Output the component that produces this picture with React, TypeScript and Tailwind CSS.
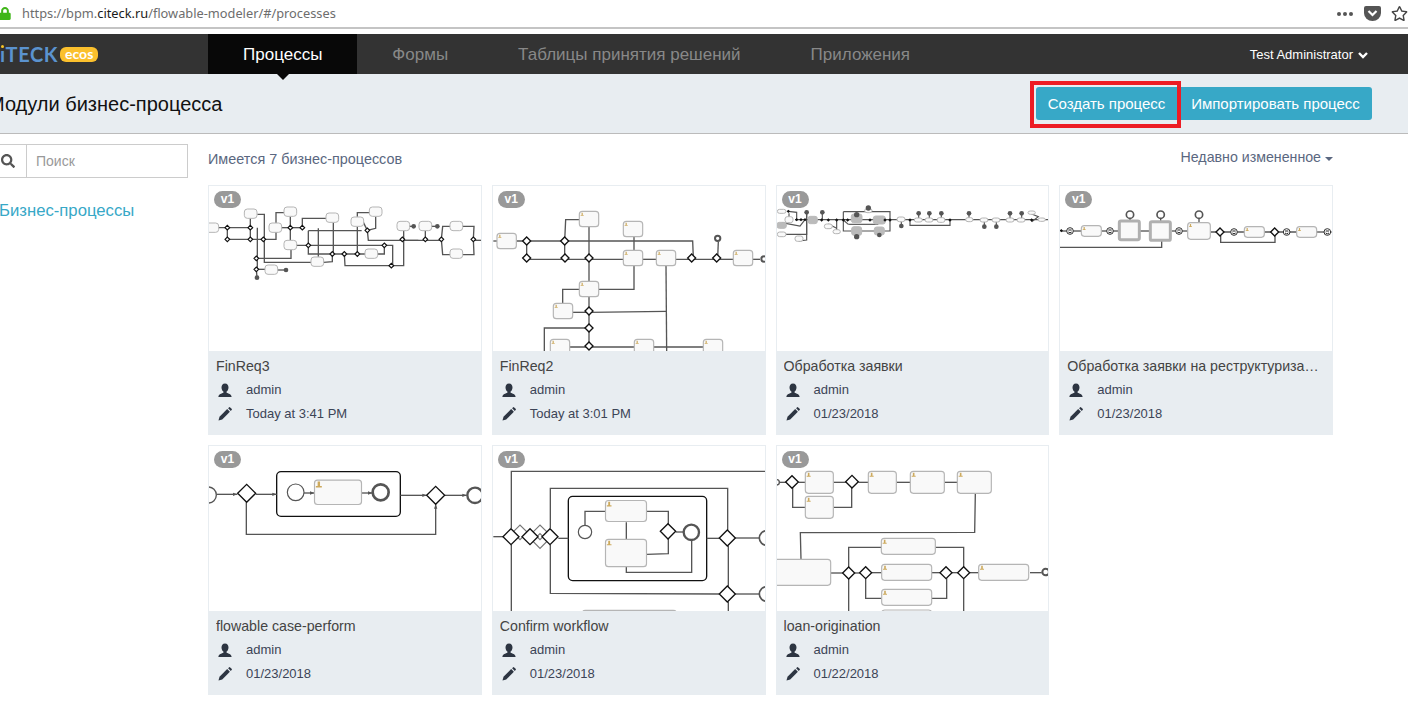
import React from "react";
import { FaSearch, FaLock, FaRegStar } from "react-icons/fa";

type Diagram = {
  vb: string;
  lines: number[][];
  tasks?: number[][];
  heavy?: number[][];
  gws?: number[][];
  faint?: number[][];
  circles?: number[][];
  dots?: number[][];
  tiny?: number[][];
  subs?: number[][];
  smiles?: number[][];
  mark?: number;
  arrows?: boolean;
  sw?: number;
  taskSw?: number;
  rx?: number;
};

const DiagramSvg = ({ d }: { d: Diagram }) => {
  const sw = d.sw ?? 4;
  const ts = d.taskSw ?? 3.5;
  const rx = d.rx ?? 9;
  const id = d.vb.replace(/\s/g, "-");
  return (
    <svg viewBox={d.vb} className="block w-full h-full" preserveAspectRatio="xMinYMin slice">
      <defs>
        <marker id={id} markerUnits="userSpaceOnUse" markerWidth="14" markerHeight="12" refX="13" refY="6" orient="auto">
          <path d="M0 1L13 6L0 11z" fill="#555" />
        </marker>
      </defs>
      {d.faint?.map(([x, y, r], i) => (
        <path key={i} d={`M${x - r} ${y}L${x} ${y - r}L${x + r} ${y}L${x} ${y + r}z`} fill="none" stroke="#777" strokeWidth={3.5} />
      ))}
      {d.subs?.map(([x, y, w, h], i) => (
        <rect key={i} x={x} y={y} width={w} height={h} rx={13} fill="#fff" stroke="#111" strokeWidth={4} />
      ))}
      {d.lines.map((l, i) => (
        <polyline
          key={i}
          points={l.join(" ")}
          fill="none"
          stroke="#555"
          strokeWidth={sw}
          markerEnd={d.arrows ? `url(#${id})` : undefined}
        />
      ))}
      {d.tasks?.map(([cx, cy, w, h, g], i) => (
        <g key={i}>
          <rect x={cx - w / 2} y={cy - h / 2} width={w} height={h} rx={rx} fill={g ? "#bbbbbb" : "#f9f9f9"} stroke={g ? "#bbb" : "#b5b5b5"} strokeWidth={ts} />
          {d.mark ? (
            <path
              d={`M${cx - w / 2 + 4} ${cy - h / 2 + 4 + d.mark}h${d.mark}v-${d.mark * 0.25}h-${d.mark * 0.3}v-${d.mark * 0.75}h-${d.mark * 0.4}v${d.mark * 0.75}h-${d.mark * 0.3}z`}
              fill="#cdaa5e"
            />
          ) : null}
        </g>
      ))}
      {d.heavy?.map(([cx, cy, w, h], i) => (
        <rect key={i} x={cx - w / 2} y={cy - h / 2} width={w} height={h} rx={5} fill="#f9f9f9" stroke="#b0b0b0" strokeWidth={9} />
      ))}
      {d.circles?.map(([x, y, r, s], i) => (
        <circle key={i} cx={x} cy={y} r={r} fill="#fff" stroke="#555" strokeWidth={s} />
      ))}
      {d.smiles?.map(([x, y], i) => (
        <g key={i}>
          <circle cx={x} cy={y} r={10} fill="#fff" stroke="#333" strokeWidth={3} />
          <path d={`M${x - 5} ${y - 3}h10M${x - 5} ${y + 3}q5 5 10 0`} fill="none" stroke="#222" strokeWidth={3} />
        </g>
      ))}
      {d.dots?.map(([x, y, r], i) => (
        <circle key={i} cx={x} cy={y} r={r} fill="#555" />
      ))}
      {d.gws?.map(([x, y, r], i) => (
        <path key={i} d={`M${x - r} ${y}L${x} ${y - r}L${x + r} ${y}L${x} ${y + r}z`} fill="#fff" stroke="#111" strokeWidth={r > 10 ? 4 : 3.5} />
      ))}
      {d.tiny?.map(([x, y], i) => (
        <path key={i} d={`M${x - 5} ${y}L${x} ${y - 5}L${x + 5} ${y}L${x} ${y + 5}z`} fill="#111" />
      ))}
    </svg>
  );
};

const T1 = (x: number, y: number) => [x, y, 38, 28];
const T2 = (x: number, y: number) => [x, y, 58, 46];
const G1 = (x: number, y: number) => [x, y, 7];
const G2 = (x: number, y: number) => [x, y, 12];
const E = (x: number, y: number, w: number, h: number, g = 0) => [x, y, w, h, g];

const d1: Diagram = {
  vb: "12 18 816 495",
  taskSw: 3,
  lines: [
    [40, 143, 136, 143], [67, 143, 67, 178], [67, 178, 213, 178, 213, 130], [136, 178, 136, 115],
    [157, 103, 178, 103, 178, 247, 320, 247], [157, 143, 157, 268], [154, 235, 258, 235, 258, 210],
    [154, 268, 180, 268], [218, 270, 243, 270], [154, 268, 156, 293], [213, 130, 213, 98, 238, 98],
    [256, 110, 256, 180], [230, 143, 292, 143], [292, 143, 292, 115, 365, 115],
    [310, 152, 470, 152], [310, 152, 310, 222, 382, 222], [275, 196, 538, 196], [340, 145, 340, 230],
    [385, 128, 385, 222], [356, 247, 382, 245, 382, 222], [382, 222, 480, 222], [457, 140, 457, 222],
    [457, 110, 457, 98, 495, 98], [475, 127, 487, 151], [512, 110, 512, 145, 487, 151],
    [487, 151, 490, 181, 640, 181], [538, 196, 538, 222, 518, 222], [538, 196, 563, 196, 563, 257, 559, 257],
    [418, 222, 420, 257, 559, 257], [559, 257, 596, 257, 596, 152], [661, 178, 661, 152],
    [592, 181, 709, 181], [709, 178, 713, 139, 735, 139], [773, 139, 807, 139, 805, 178],
    [709, 178, 713, 224, 735, 224], [773, 224, 807, 224, 805, 178], [805, 181, 830, 181],
    [610, 139, 626, 139], [680, 139, 697, 139],
  ],
  tasks: [
    T1(22, 143), T1(137, 101), T1(256, 95), T1(211, 143), T1(256, 195), T1(382, 113), T1(457, 125),
    T1(512, 95), T1(337, 245), T1(499, 221), T1(595, 138), T1(661, 138), T1(754, 138), T1(754, 221), T1(199, 269),
  ],
  gws: [
    G1(67, 143), G1(67, 178), G1(136, 143), G1(136, 178), G1(175, 178), G1(256, 143), G1(292, 143),
    G1(310, 196), G1(382, 222), G1(418, 222), G1(457, 222), G1(487, 151), G1(538, 196), G1(559, 257),
    G1(592, 178), G1(661, 178), G1(709, 178), G1(805, 178), G1(154, 235), G1(154, 268),
  ],
  dots: [[626, 139, 7], [697, 139, 7], [243, 270, 7], [156, 293, 7]],
};

const d2: Diagram = {
  vb: "9 18 816 495",
  mark: 9,
  lines: [
    [10, 183, 22, 183], [79, 183, 608, 183, 610, 234], [110, 183, 110, 234], [110, 238, 400, 238],
    [224, 183, 224, 234], [224, 183, 227, 119, 268, 119], [297, 140, 297, 510], [432, 170, 432, 211],
    [458, 238, 499, 238], [557, 238, 680, 238], [683, 234, 685, 185], [680, 238, 730, 238], [788, 238, 810, 238],
    [326, 328, 432, 328, 432, 257], [268, 328, 218, 328, 218, 370], [248, 397, 297, 397], [297, 397, 528, 394],
    [528, 257, 530, 515], [297, 444, 163, 444, 163, 515], [240, 501, 433, 501], [491, 501, 640, 501],
  ],
  tasks: [
    T2(50, 183), T2(297, 117), T2(429, 147), T2(429, 234), T2(528, 234), T2(759, 234), T2(297, 327),
    T2(219, 393), T2(210, 501), T2(462, 501), T2(669, 501),
  ],
  gws: [
    G2(110, 183), G2(224, 183), G2(110, 234), G2(225, 234), G2(297, 234), G2(605, 234), G2(680, 234),
    G2(297, 393), G2(297, 444), G2(297, 498),
  ],
  circles: [[683, 175, 8, 6], [822, 237, 8, 6]],
};

const d3: Diagram = {
  vb: "6 18 816 495",
  sw: 3.5,
  taskSw: 3,
  rx: 7,
  lines: [
    [60, 119, 820, 119], [205, 95, 345, 95, 345, 153, 205, 153, 205, 95], [220, 133, 310, 133],
    [405, 122, 405, 136, 525, 136, 525, 122], [40, 94, 65, 97, 65, 119], [30, 163, 95, 163, 95, 100],
    [72, 183, 95, 180, 95, 119], [42, 110, 42, 100], [20, 128, 75, 138, 90, 119], [160, 132, 185, 145],
    [185, 120, 185, 155], [205, 120, 220, 133], [245, 104, 245, 115], [313, 165, 313, 150], [280, 85, 280, 95],
    [379, 126, 379, 138], [431, 100, 431, 116], [463, 100, 463, 116], [499, 100, 499, 116], [582, 100, 582, 116],
    [628, 126, 628, 140], [664, 126, 664, 140], [705, 100, 705, 116], [740, 100, 740, 116], [142, 97, 142, 120],
    [95, 97, 95, 119], [770, 102, 790, 110, 770, 125],
  ],
  tasks: [
    E(20, 94, 26, 12), E(42, 119, 24, 18), E(20, 163, 26, 14), E(72, 176, 24, 16), E(20, 136, 28, 18, 1),
    E(113, 120, 28, 22, 1), E(160, 139, 24, 14), E(185, 155, 22, 12), E(280, 92, 22, 12), E(245, 115, 32, 26, 1),
    E(313, 120, 36, 24, 1), E(245, 153, 30, 26, 1), E(313, 153, 30, 24, 1), E(378, 118, 24, 14), E(430, 120, 24, 12),
    E(462, 120, 24, 12), E(498, 120, 24, 14), E(583, 119, 22, 12), E(627, 120, 24, 12), E(663, 120, 24, 12),
    E(705, 120, 24, 12), E(738, 120, 24, 12), E(770, 98, 22, 10), E(800, 119, 22, 10),
  ],
  dots: [
    [95, 97, 7], [142, 97, 7], [280, 84, 8], [245, 104, 8], [245, 170, 8], [313, 165, 7], [379, 138, 7], [431, 100, 7],
    [463, 100, 7], [499, 100, 7], [582, 100, 7], [628, 140, 7], [664, 140, 7], [705, 100, 7], [740, 100, 7],
  ],
  tiny: [
    [40, 94], [65, 119], [78, 119], [90, 119], [140, 120], [160, 120], [185, 120], [205, 120], [218, 120], [285, 120],
    [330, 120], [345, 120], [405, 120], [525, 120], [770, 120],
  ],
};

const d4: Diagram = {
  vb: "15 18 816 495",
  mark: 9,
  lines: [
    [12, 202, 320, 202, 320, 180], [20, 153, 80, 153], [140, 153, 192, 153], [255, 153, 285, 153], [350, 153, 398, 153],
    [467, 156, 570, 156], [628, 156, 725, 156], [785, 156, 830, 156], [497, 168, 497, 187, 660, 187, 660, 168],
    [225, 116, 225, 125], [317, 116, 317, 125], [432, 116, 432, 128],
  ],
  tasks: [E(109, 153, 60, 32), E(432, 153, 68, 50), E(598, 156, 60, 32), E(755, 156, 60, 32)],
  heavy: [[223, 151, 60, 56], [316, 153, 60, 56]],
  circles: [[225, 104, 11, 5], [317, 104, 11, 5], [432, 104, 11, 5]],
  smiles: [[45, 153], [165, 153], [372, 153], [537, 156], [695, 156], [817, 156]],
  gws: [G2(495, 156), G2(659, 156)],
  tiny: [[19, 152]],
};

const d5: Diagram = {
  vb: "12 3 816 495",
  mark: 18,
  arrows: true,
  subs: [[215, 80, 371, 134]],
  lines: [
    [35, 148, 97, 148], [152, 148, 215, 148], [297, 144, 328, 144], [469, 144, 502, 144], [586, 151, 665, 151],
    [720, 151, 785, 151], [124, 172, 124, 268, 692, 268, 692, 178],
  ],
  tasks: [[399, 142, 141, 73]],
  circles: [[10, 150, 24, 4], [272, 142, 25, 3.5], [527, 142, 24, 8], [810, 151, 23, 7]],
  gws: [[125, 145, 27], [692, 151, 27]],
};

const d6: Diagram = {
  vb: "9 3 816 495",
  mark: 14,
  faint: [[90, 262, 22], [150, 262, 22], [150, 288, 22]],
  subs: [[235, 154, 415, 253]],
  lines: [
    [64, 250, 64, 79, 830, 79], [64, 300, 64, 500], [10, 275, 40, 275], [181, 250, 181, 130, 713, 130, 713, 255],
    [181, 300, 181, 445, 690, 447], [205, 280, 235, 280], [285, 240, 285, 199, 347, 199], [409, 283, 409, 232],
    [470, 199, 535, 199, 535, 237], [557, 261, 582, 261], [535, 282, 535, 326, 470, 328],
    [409, 365, 409, 382, 605, 382, 605, 285], [650, 280, 690, 280], [735, 279, 810, 279], [715, 302, 715, 425],
    [735, 447, 810, 447], [715, 470, 715, 500],
  ],
  tasks: [[408, 198, 123, 63], [408, 324, 123, 82], [418, 522, 282, 52]],
  circles: [[285, 261, 20, 3.5], [604, 262, 23, 7], [830, 279, 22, 5], [830, 447, 22, 5]],
  gws: [[63, 275, 24], [120, 275, 24], [180, 275, 24], [534, 259, 23], [712, 279, 24], [712, 447, 24]],
};

const d7: Diagram = {
  vb: "6 3 816 495",
  mark: 12,
  lines: [
    [10, 112, 33, 112], [70, 112, 92, 112], [175, 112, 213, 112], [250, 112, 280, 112], [365, 112, 406, 112],
    [509, 112, 547, 112], [601, 146, 599, 262, 76, 263, 78, 343], [167, 384, 205, 384], [239, 384, 256, 384],
    [290, 383, 320, 383], [221, 366, 221, 307, 320, 307], [481, 307, 566, 307, 566, 366],
    [272, 400, 272, 460, 320, 460], [470, 383, 495, 383], [531, 383, 549, 383], [515, 400, 515, 460, 470, 460],
    [584, 383, 611, 383], [765, 383, 800, 383], [221, 402, 221, 500], [566, 402, 566, 500],
    [53, 128, 53, 187, 91, 187], [176, 187, 230, 187, 230, 128],
  ],
  tasks: [
    [133, 112, 84, 66], [133, 187, 84, 66], [322, 112, 84, 66], [457, 112, 102, 66], [598, 112, 102, 66],
    [400, 304, 162, 48], [395, 382, 150, 48], [395, 457, 150, 48], [395, 520, 150, 50], [686, 382, 150, 48],
    [70, 382, 194, 78],
  ],
  circles: [[5, 112, 8, 4], [812, 381, 10, 6]],
  gws: [[51, 111, 19], [231, 110, 19], [221, 384, 18], [272, 383, 18], [513, 383, 18], [566, 383, 18]],
};

const cards = [
  { title: "FinReq3", date: "Today at 3:41 PM", d: d1 },
  { title: "FinReq2", date: "Today at 3:01 PM", d: d2 },
  { title: "Обработка заявки", date: "01/23/2018", d: d3 },
  { title: "Обработка заявки на реструктуризацию", date: "01/23/2018", d: d4 },
  { title: "flowable case-perform", date: "01/23/2018", d: d5 },
  { title: "Confirm workflow", date: "01/23/2018", d: d6 },
  { title: "loan-origination", date: "01/22/2018", d: d7 },
];

const UserIcon = () => (
  <svg viewBox="0 0 14 14" className="w-[14px] h-[14px] shrink-0" fill="#2d3542">
    <path d="M7 0.5c2.400 0 3.500 1.800 3.500 4 0 1.800-.9 3.400-1.900 4.100v1.200c1.500.8 5 1.200 5 4.200H0.4c0-3 3.500-3.400 5-4.200V8.600C4.400 7.900 3.500 6.300 3.500 4.500c0-2.200 1.100-4 3.500-4z" />
  </svg>
);

const PencilIcon = () => (
  <svg viewBox="0 0 14 14" className="w-[14px] h-[14px] shrink-0" fill="#2d3542">
    <path d="M0.500 13.500l1-3.700L9.200 2.100l2.700 2.700L4.200 12.500z" />
    <path d="M10.100 1.200l.8-.8a.9.9 0 0 1 1.300 0l1.400 1.400a.9.9 0 0 1 0 1.300l-.8.8z" />
  </svg>
);

const Card = ({ title, date, d }: { title: string; date: string; d: Diagram }) => (
  <div className="flex flex-col h-[250px] min-w-0">
    <div className="relative h-[166px] bg-white border border-[#e8edf1] border-b-0 overflow-hidden">
      <DiagramSvg d={d} />
      <span className="absolute left-[5px] top-[5px] w-[27px] h-[17px] rounded-full bg-[#999] text-white text-[12px] font-bold leading-[17px] text-center">
        v1
      </span>
    </div>
    <div className="flex-1 bg-[#e8edf1] pt-[6px] px-[8px]">
      <div className="text-[14.2px] leading-[18px] truncate text-[#444] pr-[4px]">{title}</div>
      <div className="flex items-center h-[24px] mt-[3px] pl-[2px] text-[13px] text-[#3c4456]">
        <UserIcon />
        <span className="ml-[14px]">admin</span>
      </div>
      <div className="flex items-center h-[24px] pl-[2px] text-[13px] text-[#3c4456]">
        <PencilIcon />
        <span className="ml-[14px]">{date}</span>
      </div>
    </div>
  </div>
);

const tabs = ["Формы", "Таблицы принятия решений", "Приложения"];

export default function App() {
  return (
    <div className="h-[707px] w-[1408px] overflow-hidden bg-white font-['Liberation_Sans',Arial,sans-serif]">
      {/* browser bar */}
      <div className="h-[29px] flex items-center border-b-2 border-[#c4c4c4] font-['Noto_Sans',sans-serif]">
        <FaLock className="w-[12px] h-[13px] -ml-[1px] text-[#3fb618]" />
        <div className="ml-[11px] pt-[1px] text-[12.8px] text-[#6d6d6d] whitespace-nowrap">
          https://bpm.<span className="text-[#1a1a1a]">citeck.ru</span>/flowable-modeler/#/processes
        </div>
        <div className="ml-auto flex items-center">
          <div className="flex gap-[2px] mr-[11px]">
            <span className="w-[4px] h-[4px] rounded-full bg-[#555]" />
            <span className="w-[4px] h-[4px] rounded-full bg-[#555]" />
            <span className="w-[4px] h-[4px] rounded-full bg-[#555]" />
          </div>
          <svg viewBox="0 0 17 15" className="w-[17px] h-[15px] mr-[10px]">
            <path d="M2 0h13a2 2 0 0 1 2 2v5a8.500 8 0 0 1-17 0V2a2 2 0 0 1 2-2z" fill="#555" />
            <path d="M4.500 5l4 4 4-4" fill="none" stroke="#fff" strokeWidth="2.200" />
          </svg>
          <FaRegStar className="w-[17px] h-[17px] text-[#444]" />
        </div>
      </div>

      {/* navbar */}
      <div className="mt-[5px] h-[40px] bg-[#333] flex items-stretch">
        <div className="w-[208px] flex items-center shrink-0">
          <span className="relative font-['Lato',sans-serif] font-bold text-[20px] leading-none tracking-[0.6px] text-[#5b93cf]">
            ıTECK
            <span className="absolute left-[1px] top-[1px] w-[3px] h-[3px] rounded-full bg-[#f7c325]" />
          </span>
          <span className="ml-[2px] w-[38px] h-[15px] rounded-[6px] bg-[#fbc02d] text-white text-center text-[14px] leading-[14px] font-bold font-['Lato',sans-serif]">
            ecos
          </span>
        </div>
        <div className="relative bg-[#080808] px-[35px] pt-[1px] flex items-center text-white text-[17px]">
          Процессы
          <span className="absolute left-1/2 -ml-[6px] top-full w-0 h-0 border-x-[6px] border-x-transparent border-t-[6px] border-t-[#080808]" />
        </div>
        {tabs.map((t) => (
          <div key={t} className="px-[35px] pt-[1px] flex items-center text-[#888] text-[17px]">
            {t}
          </div>
        ))}
        <div className="ml-auto mr-[40px] pt-[1px] flex items-center text-white text-[13px]">
          Test Administrator
          <svg viewBox="0 0 10 8" className="w-[10px] h-[8px] ml-[5px]">
            <path d="M1 2l4 4 4-4" fill="none" stroke="#fff" strokeWidth="2.400" />
          </svg>
        </div>
      </div>

      {/* sub header */}
      <div className="h-[60px] bg-[#e8edf1] border-b border-[#bbb] flex items-center">
        <h1 className="-ml-[12px] text-[20px] text-[#111] font-normal whitespace-nowrap">Модули бизнес-процесса</h1>
        <div className="ml-auto mr-[36px] flex items-center text-white text-[15px]">
          <div className="relative">
            <div className="w-[140px] h-[33px] pt-[1px] pl-[1px] bg-[#37a8c7] rounded-l-[3px] flex items-center justify-center">Создать процесс</div>
            <span className="absolute -left-[6px] -top-[6px] w-[151px] h-[47px] border-[4px] border-[#ed1c24]" />
          </div>
          <div className="w-[196px] h-[33px] pt-[1px] bg-[#37a8c7] rounded-r-[3px] flex items-center justify-center pl-[3px]">Импортировать процесс</div>
        </div>
      </div>

      {/* body */}
      <div className="flex">
        <aside className="w-[208px] shrink-0 pt-[10px]">
          <div className="w-[188px] h-[34px] border border-l-0 border-[#ccc] flex items-center">
            <div className="w-[27px] h-full border-r border-[#ccc] flex items-center pl-[1px]">
              <FaSearch className="w-[14px] h-[14px] text-[#555]" />
            </div>
            <span className="ml-[9px] text-[14px] text-[#999]">Поиск</span>
          </div>
          <div className="-ml-[1px] mt-[23px] text-[16.7px] leading-[20px] text-[#37a8c7] whitespace-nowrap">Бизнес-процессы</div>
        </aside>
        <main className="w-[1125px] pt-[16px]">
          <div className="flex items-center justify-between h-[20px] text-[#5a6780]">
            <span className="text-[14.4px]">Имеется 7 бизнес-процессов</span>
            <span className="flex items-center text-[14.2px] pb-[5px]">
              Недавно измененное
              <span className="ml-[4px] mt-[2px] w-0 h-0 border-x-[4px] border-x-transparent border-t-[4px] border-t-[#5a6780]" />
            </span>
          </div>
          <div className="mt-[15px] grid grid-cols-4 gap-[10px]">
            {cards.map((c) => (
              <Card key={c.title} {...c} />
            ))}
          </div>
        </main>
      </div>
    </div>
  );
}
